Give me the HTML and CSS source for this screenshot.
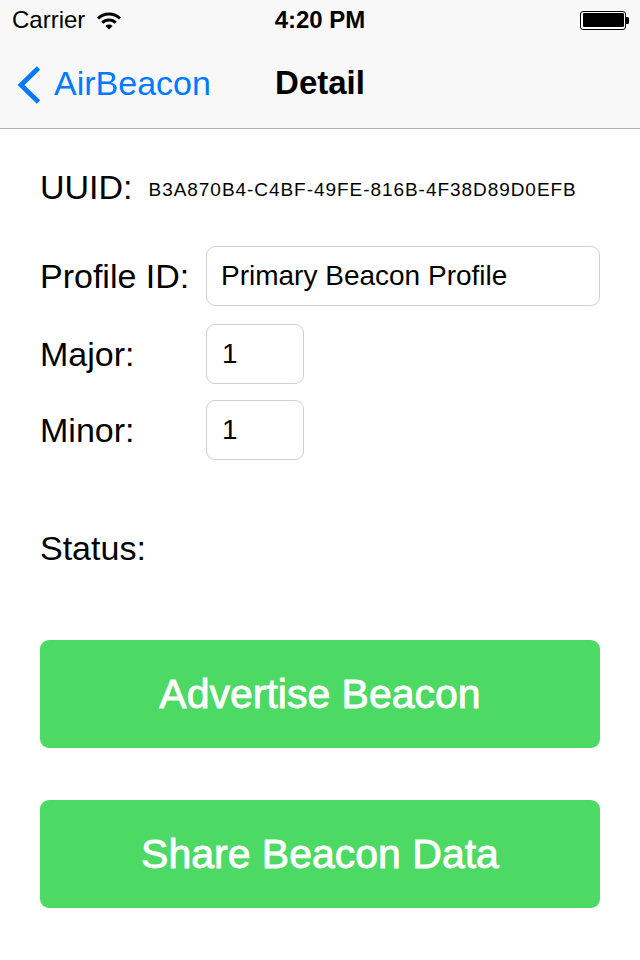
FILE: index.html
```html
<!DOCTYPE html>
<html>
<head>
<meta charset="utf-8">
<link rel="stylesheet" href="styles.css">
</head>
<body>
<div class="statusbar">
  <div class="sb-left">
    <span class="carrier">Carrier</span>
    <svg class="wifi" width="26" height="19" viewBox="0 0 26 19">
      <path d="M2.04 7.54 A15.5 15.5 0 0 1 23.96 7.54" fill="none" stroke="#000" stroke-width="3"/>
      <path d="M6.28 11.78 A9.5 9.5 0 0 1 19.72 11.78" fill="none" stroke="#000" stroke-width="3"/>
      <path d="M13 18.5 L9.46 14.96 A5 5 0 0 1 16.54 14.96 Z" fill="#000"/>
    </svg>
  </div>
  <div class="sb-time">4:20 PM</div>
  <div class="sb-right">
    <div class="battery"><div class="battery-fill"></div></div>
    <div class="battery-nub"></div>
  </div>
</div>
<div class="navbar">
  <div class="nav-back">
    <svg class="chevron" width="24" height="38" viewBox="0 0 24 38">
      <path d="M21.5 2 L4 19 L21.5 36" fill="none" stroke="#007aff" stroke-width="4.8"/>
    </svg>
    <span class="back-text">AirBeacon</span>
  </div>
  <div class="nav-title">Detail</div>
  <div></div>
</div>
<main class="content">
  <div class="uuid-row">
    <span class="label">UUID:</span>
    <span class="uuid-value">B3A870B4-C4BF-49FE-816B-4F38D89D0EFB</span>
  </div>
  <div class="field-row row-profile">
    <span class="label field-label">Profile ID:</span>
    <input class="field field-wide" type="text" value="Primary Beacon Profile">
  </div>
  <div class="field-row row-major">
    <span class="label field-label">Major:</span>
    <input class="field field-small" type="text" value="1">
  </div>
  <div class="field-row row-minor">
    <span class="label field-label">Minor:</span>
    <input class="field field-small" type="text" value="1">
  </div>
  <div class="label status">Status:</div>
  <button class="btn btn-advertise">Advertise Beacon</button>
  <button class="btn btn-share">Share Beacon Data</button>
</main>
</body>
</html>
```
FILE: styles.css
```css
* { box-sizing: border-box; }
html, body {
  margin: 0;
  padding: 0;
  background: #ffffff;
  font-family: "Liberation Sans", Arial, sans-serif;
  color: #000;
}
body { width: 640px; height: 960px; overflow: hidden; }

.statusbar {
  height: 40px;
  background: #f8f8f8;
  display: grid;
  grid-template-columns: 1fr auto 1fr;
  align-items: center;
  font-size: 24px;
  line-height: 40px;
}
.sb-left {
  display: flex;
  align-items: center;
  padding-left: 12px;
}
.wifi { margin-left: 11px; margin-top: 1px; }
.sb-time { font-weight: bold; }
.sb-right {
  display: flex;
  justify-content: flex-end;
  align-items: center;
  padding-right: 11px;
}
.battery {
  width: 46px;
  height: 19px;
  border: 1.5px solid #000;
  border-radius: 3px;
  padding: 1.5px;
  background: #fff;
}
.battery-fill {
  width: 100%;
  height: 100%;
  background: #000;
  border-radius: 1px;
}
.battery-nub {
  width: 3px;
  height: 7px;
  background: #000;
  border-radius: 0 1.5px 1.5px 0;
}

.navbar {
  height: 89px;
  background: #f8f8f8;
  border-bottom: 1px solid #b2b2b2;
  display: grid;
  grid-template-columns: 1fr auto 1fr;
  align-items: center;
  font-size: 34px;
  line-height: 40px;
  padding-bottom: 2px;
}
.nav-back {
  display: flex;
  align-items: center;
  padding-left: 17px;
  color: #007aff;
}
.chevron { margin-right: 13px; margin-top: 3px; }
.nav-title {
  font-weight: bold;
  font-size: 33px;
}

.content {
  padding: 38px 40px 0 40px;
}
.label {
  font-size: 34px;
  line-height: 40px;
}
.uuid-row {
  display: flex;
  align-items: center;
  gap: 16px;
  height: 40px;
}
.uuid-value {
  font-size: 19px;
  line-height: 22px;
  letter-spacing: 0.95px;
  padding-top: 5px;
}
.field-row {
  display: flex;
  align-items: center;
}
.field-label { width: 166px; flex: none; }
.row-profile { margin-top: 39px; }
.row-major { margin-top: 18px; }
.row-minor { margin-top: 16px; }
.field {
  height: 60px;
  border: 1px solid #d0d0d0;
  border-radius: 9px;
  background: #fff;
  font-family: "Liberation Sans", Arial, sans-serif;
  font-size: 28px;
  color: #000;
  padding: 0 0 0 14px;
  margin: 0;
  outline: none;
}
.field-wide { width: 394px; }
.field-small { width: 98px; padding-left: 15px; }

.status { margin-top: 68px; }

.btn {
  display: block;
  width: 560px;
  height: 108px;
  border: none;
  border-radius: 9px;
  background: #4cd964;
  color: #fff;
  font-family: "Liberation Sans", Arial, sans-serif;
  font-size: 41px;
  -webkit-text-stroke: 0.9px #fff;
  padding: 0;
  margin: 0;
}
.btn-advertise { margin-top: 72px; }
.btn-share { margin-top: 52px; }
```
